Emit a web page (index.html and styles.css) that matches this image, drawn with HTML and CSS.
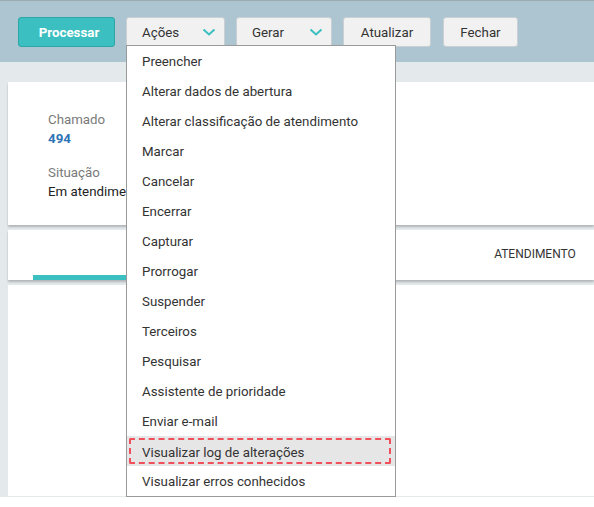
FILE: index.html
```html
<!DOCTYPE html>
<html lang="pt-BR">
<head>
    <meta charset="UTF-8">
    <title>Chamado 494</title>
    <link rel="stylesheet" href="styles.css">
</head>
<body>
    <div class="toolbar">
        <button class="btn primary">Processar</button>
        <div class="dropdown">
            <button class="btn select open">Ações
                <svg class="chev" width="14" height="8" viewBox="0 0 14 8"><path d="M1.5 1.5 L7 6.5 L12.5 1.5" fill="none" stroke="#3bbfc0" stroke-width="2"/></svg>
            </button>
            <ul class="menu">
                <li>Preencher</li>
                <li>Alterar dados de abertura</li>
                <li>Alterar classificação de atendimento</li>
                <li>Marcar</li>
                <li>Cancelar</li>
                <li>Encerrar</li>
                <li>Capturar</li>
                <li>Prorrogar</li>
                <li>Suspender</li>
                <li>Terceiros</li>
                <li>Pesquisar</li>
                <li>Assistente de prioridade</li>
                <li>Enviar e-mail</li>
                <li class="active"><span class="focus">Visualizar log de alterações</span></li>
                <li>Visualizar erros conhecidos</li>
            </ul>
        </div>
        <button class="btn select">Gerar
            <svg class="chev" width="14" height="8" viewBox="0 0 14 8"><path d="M1.5 1.5 L7 6.5 L12.5 1.5" fill="none" stroke="#3bbfc0" stroke-width="2"/></svg>
        </button>
        <button class="btn w-atualizar">Atualizar</button>
        <button class="btn w-fechar">Fechar</button>
    </div>

    <div class="content">
        <div class="card info">
            <div class="field">
                <div class="label">Chamado</div>
                <div class="value number">494</div>
            </div>
            <div class="field">
                <div class="label">Situação</div>
                <div class="value">Em atendimento</div>
            </div>
        </div>

        <div class="card tabs">
            <div class="tab current"></div>
            <div class="tab-gap"></div>
            <div class="tab">ATENDIMENTO</div>
        </div>

        <div class="card body-card"></div>
    </div>
</body>
</html>
```

FILE: styles.css
```css
body {
    margin: 0;
    font-family: Roboto, "Liberation Sans", sans-serif;
    font-size: 13.3px;
    color: #333;
    background: #fff;
}
.toolbar {
    display: flex;
    align-items: flex-start;
    gap: 11px;
    padding: 16px 18px 0;
    box-sizing: border-box;
    background: #adc5d1;
    border-top: 1px solid #9ba9b1;
    height: 62px;
}
.btn {
    height: 30px;
    box-sizing: border-box;
    border: 1px solid #c9cfd3;
    border-radius: 3px;
    background: #f1f1f1;
    color: #333;
    font-family: inherit;
    font-size: 13.3px;
    padding: 0;
    cursor: pointer;
}
.btn.primary {
    width: 97px;
    padding-left: 5px;
    background: #3bbfc0;
    border-color: #2ea5a6;
    color: #fff;
    font-weight: bold;
}
.btn.select {
    width: 96px;
    display: flex;
    align-items: center;
    justify-content: space-between;
    padding: 0 8px 0 15px;
}
.dropdown {
    position: relative;
}
.dropdown .btn.select {
    width: 99px;
}
.w-atualizar {
    width: 88px;
}
.w-fechar {
    width: 75px;
    margin-left: 1px;
}
.menu {
    position: absolute;
    top: 28px;
    left: 0;
    width: 268px;
    margin: 0;
    padding: 0;
    list-style: none;
    background: #fff;
    border: 1px solid #9a9a9a;
    z-index: 10;
}
.menu li {
    height: 30px;
    line-height: 31px;
    padding-left: 15px;
    white-space: nowrap;
    color: #333;
}
.menu li.active {
    background: #e6e6e6;
    padding: 2px 4px 2px 2px;
    box-sizing: border-box;
}
.menu li.active .focus {
    display: block;
    height: 26px;
    line-height: 25px;
    padding-left: 11px;
    box-sizing: border-box;
    border: 2px dashed #f0505b;
    border-radius: 2px;
}
.content {
    background: #e4e9ec;
    padding: 20px 0 0 8px;
    height: 435px;
    box-sizing: border-box;
}
.card {
    background: #fff;
    box-shadow: 0 2px 2px rgba(0,0,0,0.22);
    margin-bottom: 5px;
}
.info {
    height: 143px;
    padding: 28px 40px 0;
    box-sizing: border-box;
}
.field {
    margin-bottom: 15px;
}
.label {
    color: #7a7a7a;
    line-height: 19px;
}
.value {
    color: #222;
    line-height: 19px;
}
.value.number {
    color: #2f74b5;
    font-weight: bold;
}
.tabs {
    height: 50px;
    display: flex;
    align-items: stretch;
}
.tab {
    display: flex;
    align-items: center;
    justify-content: center;
    font-size: 12px;
    color: #333;
    width: 130px;
    padding-bottom: 2px;
}
.tab.current {
    width: 300px;
    margin-left: 25px;
    border-bottom: 5px solid #3bbfc0;
}
.tab-gap {
    flex: 1;
}
.tab:last-child {
    width: 118px;
}
.body-card {
    height: 211px;
    margin-bottom: 0;
    box-shadow: none;
}
```
